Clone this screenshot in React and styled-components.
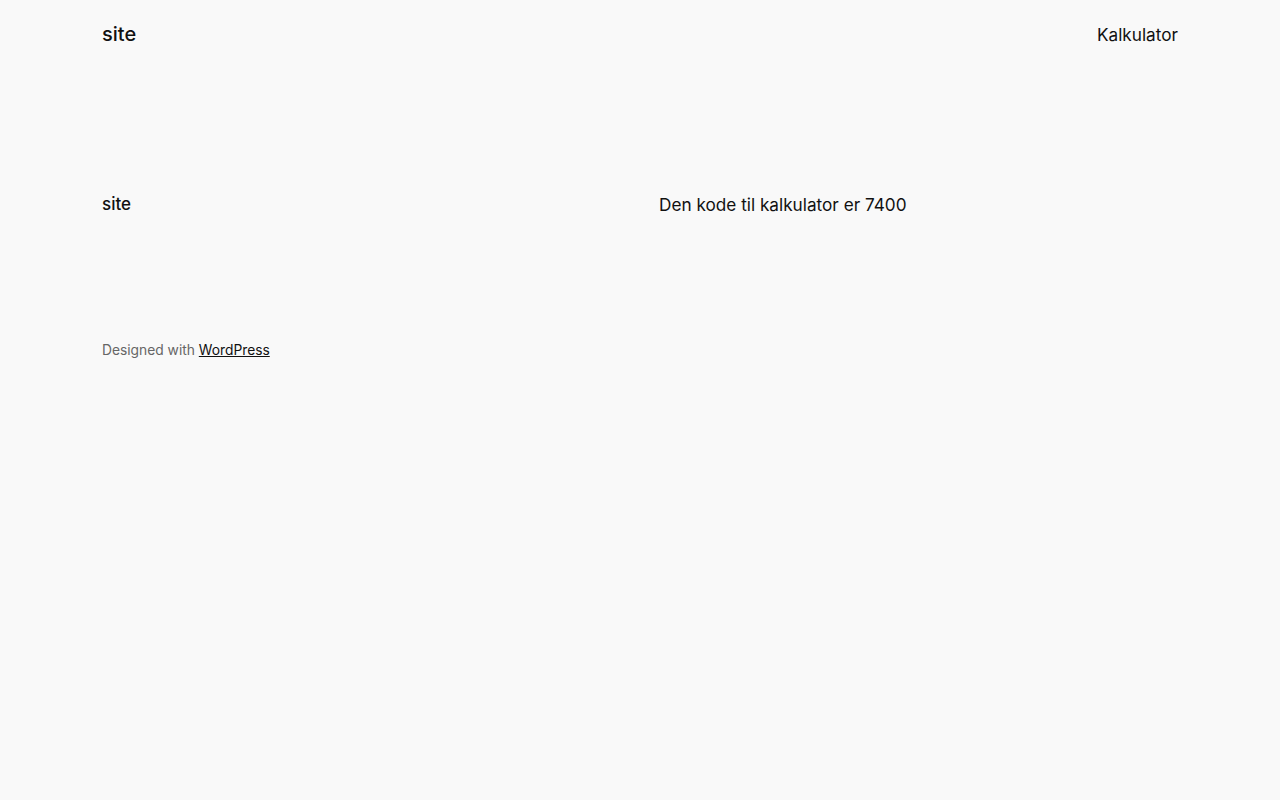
import React from "react";
import styled, { createGlobalStyle } from "styled-components";

const GlobalStyle = createGlobalStyle`
  html, body {
    margin: 0;
    padding: 0;
    background: #f9f9f9;
    min-height: 100%;
  }
  body {
    font-family: Inter, "Noto Sans", sans-serif;
    color: #111111;
    min-height: 800px;
  }
`;

const Page = styled.div`
  background: #f9f9f9;
  min-height: 800px;
`;

const Header = styled.header`
  height: 68px;
  padding: 0 102px;
  display: flex;
  align-items: center;
  justify-content: space-between;
`;

const SiteTitle = styled.a`
  font-size: 20px;
  font-weight: 500;
  color: #111111;
  text-decoration: none;
`;

const NavLink = styled.a`
  font-size: 17.2px;
  font-weight: 400;
  color: #111111;
  text-decoration: none;
`;

const Footer = styled.footer`
  padding: 122px 102px 0;
  display: flex;
  flex-direction: column;
  gap: 122px;
`;

const FooterRow = styled.div`
  display: grid;
  grid-template-columns: 1fr 1fr;
  column-gap: 38px;
  align-items: center;
  height: 28px;
`;

const FooterTitle = styled.span`
  font-size: 17px;
  font-weight: 500;
  color: #111111;
`;

const FooterText = styled.p`
  margin: 0;
  font-size: 17.2px;
  color: #111111;
`;

const Credits = styled.p`
  margin: 0;
  font-size: 13.8px;
  line-height: 20px;
  color: #666666;

  a {
    color: #111111;
    text-decoration: underline;
  }
`;

export default function App() {
  return (
    <Page>
      <GlobalStyle />
      <Header>
        <SiteTitle href="#">site</SiteTitle>
        <NavLink href="#">Kalkulator</NavLink>
      </Header>
      <Footer>
        <FooterRow>
          <FooterTitle>site</FooterTitle>
          <FooterText>Den kode til kalkulator er 7400</FooterText>
        </FooterRow>
        <Credits>
          Designed with <a href="#">WordPress</a>
        </Credits>
      </Footer>
    </Page>
  );
}
